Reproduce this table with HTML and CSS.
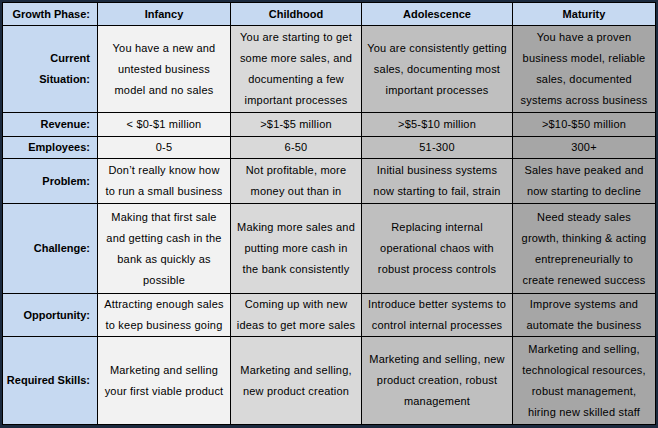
FILE: index.html
```html
<!DOCTYPE html>
<html>
<head>
<meta charset="utf-8">
<link rel="stylesheet" href="styles.css">
</head>
<body>
<table class="phases">
  <colgroup>
    <col class="c-label">
    <col class="c-inf">
    <col class="c-chi">
    <col class="c-ado">
    <col class="c-mat">
  </colgroup>
  <tr class="r-head">
    <th class="label">Growth Phase:</th>
    <th class="head">Infancy</th>
    <th class="head">Childhood</th>
    <th class="head">Adolescence</th>
    <th class="head">Maturity</th>
  </tr>
  <tr class="r-current">
    <th class="label">Current<br>Situation:</th>
    <td class="inf">You have a new and<br>untested business<br>model and no sales</td>
    <td class="chi">You are starting to get<br>some more sales, and<br>documenting a few<br>important processes</td>
    <td class="ado">You are consistently getting<br>sales, documenting most<br>important processes</td>
    <td class="mat">You have a proven<br>business model, reliable<br>sales, documented<br>systems across business</td>
  </tr>
  <tr class="r-revenue">
    <th class="label">Revenue:</th>
    <td class="inf">&lt; $0-$1 million</td>
    <td class="chi">&gt;$1-$5 million</td>
    <td class="ado">&gt;$5-$10 million</td>
    <td class="mat">&gt;$10-$50 million</td>
  </tr>
  <tr class="r-employees">
    <th class="label">Employees:</th>
    <td class="inf">0-5</td>
    <td class="chi">6-50</td>
    <td class="ado">51-300</td>
    <td class="mat">300+</td>
  </tr>
  <tr class="r-problem">
    <th class="label">Problem:</th>
    <td class="inf">Don’t really know how<br>to run a small business</td>
    <td class="chi">Not profitable, more<br>money out than in</td>
    <td class="ado">Initial business systems<br>now starting to fail, strain</td>
    <td class="mat">Sales have peaked and<br>now starting to decline</td>
  </tr>
  <tr class="r-challenge">
    <th class="label">Challenge:</th>
    <td class="inf">Making that first sale<br>and getting cash in the<br>bank as quickly as<br>possible</td>
    <td class="chi">Making more sales and<br>putting more cash in<br>the bank consistently</td>
    <td class="ado">Replacing internal<br>operational chaos with<br>robust process controls</td>
    <td class="mat">Need steady sales<br>growth, thinking &amp; acting<br>entrepreneurially to<br>create renewed success</td>
  </tr>
  <tr class="r-opportunity">
    <th class="label">Opportunity:</th>
    <td class="inf">Attracting enough sales<br>to keep business going</td>
    <td class="chi">Coming up with new<br>ideas to get more sales</td>
    <td class="ado">Introduce better systems to<br>control internal processes</td>
    <td class="mat">Improve systems and<br>automate the business</td>
  </tr>
  <tr class="r-skills">
    <th class="label">Required Skills:</th>
    <td class="inf">Marketing and selling<br>your first viable product</td>
    <td class="chi">Marketing and selling,<br>new product creation</td>
    <td class="ado">Marketing and selling, new<br>product creation, robust<br>management</td>
    <td class="mat">Marketing and selling,<br>technological resources,<br>robust management,<br>hiring new skilled staff</td>
  </tr>
</table>
</body>
</html>
```
FILE: styles.css
```css
html, body {
  margin: 0;
  padding: 0;
  background: #1b2a3e;
}
body {
  padding: 2px 3px 3px 2px;
  width: 658px;
  height: 428px;
  box-sizing: border-box;
}
.phases {
  border-collapse: collapse;
  table-layout: fixed;
  width: 653px;
  font-family: "Liberation Sans", Arial, sans-serif;
  font-size: 11px;
  color: #000;
}
.c-label { width: 95px; }
.c-inf { width: 133px; }
.c-chi { width: 131px; }
.c-ado { width: 151px; }
.c-mat { width: 143px; }
.phases th, .phases td {
  border: 1px solid #000;
  padding: 0;
  vertical-align: middle;
  white-space: nowrap;
  overflow: hidden;
}
.phases td {
  text-align: center;
  line-height: 21px;
  letter-spacing: 0.2px;
}
.phases th {
  font-weight: bold;
  line-height: 21px;
}
.label {
  background: #c6d9f1;
  text-align: right;
  padding-right: 7px !important;
}
.head {
  background: #c6d9f1;
  text-align: center;
}
.inf { background: #f2f2f2; }
.chi { background: #d9d9d9; }
.ado { background: #bfbfbf; }
.mat { background: #a6a6a6; }
.r-head { height: 23px; }
.r-current { height: 87px; }
.r-revenue { height: 24px; }
.r-employees { height: 22px; }
.r-problem { height: 45px; }
.r-challenge { height: 90px; }
.r-opportunity { height: 43px; }
.r-skills { height: 88px; }
```
